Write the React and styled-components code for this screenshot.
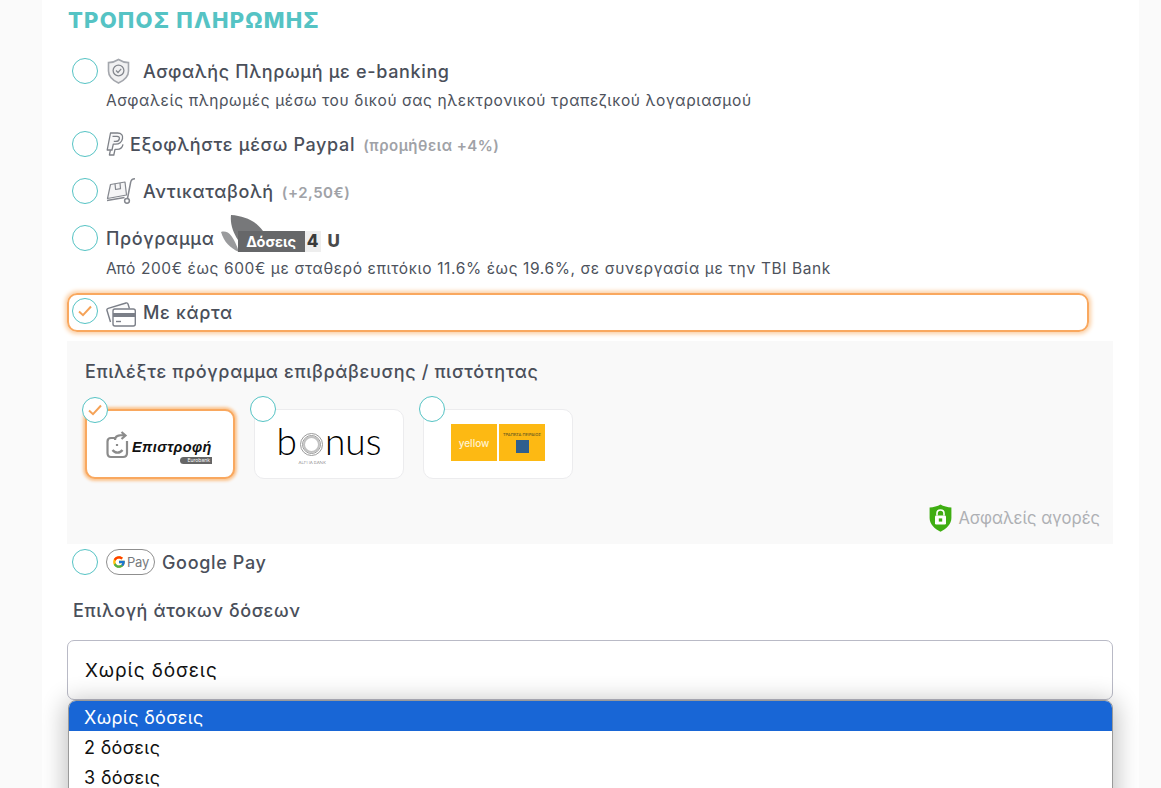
import React from "react";
import styled, { createGlobalStyle } from "styled-components";
import { FcGoogle } from "react-icons/fc";

const GlobalStyle = createGlobalStyle`
	html, body {
		margin: 0;
		height: 788px;
		overflow: hidden;
		background: #fafafa;
		font-family: "Inter", "Noto Sans", sans-serif;
	}
	* {
		box-sizing: border-box;
	}
`;

function ShieldIcon() {
	return (
		<svg width="25" height="26" viewBox="0 0 25 26" fill="none">
			<path d="M12.5 1.5 C9.5 3.5 6 4.5 2.5 4.6 V13 C2.5 18.5 7 22.5 12.5 25 C18 22.5 22.5 18.5 22.5 13 V4.6 C19 4.5 15.5 3.5 12.5 1.5Z" fill="#f1f1f2" stroke="#a4a7ad" strokeWidth="1.6" />
			<circle cx="12.5" cy="12.5" r="5.4" stroke="#85888f" strokeWidth="1.3" />
			<path d="M10 12.5 L12 14.5 L15.2 10.8" stroke="#85888f" strokeWidth="1.2" />
		</svg>
	);
}

function PaypalIcon() {
	return (
		<svg width="18" height="24" viewBox="0 0 18 24" fill="none" stroke="#7d8087" strokeWidth="1.3" strokeLinejoin="round">
			<path d="M4.5 1 H11.5 C15.5 1 17.2 3.4 16.5 6.6 C15.7 10.4 13 12.2 9.5 12.2 H7.3 L6 18 H1.2 Z" fill="#f7f7f8" />
			<path d="M6.5 4.4 H11 C13 4.4 13.7 5.4 13.3 7 C12.9 8.8 11.6 9.4 9.8 9.4 H7.8" />
			<path d="M4.4 18.2 L3.4 23 H7.8 L9 17.4 H11 C14.2 17.4 16.4 15.4 17 12.4" />
		</svg>
	);
}

function TrolleyIcon() {
	return (
		<svg width="30" height="26" viewBox="0 0 30 26" fill="none" stroke="#85888f" strokeWidth="1.2" strokeLinejoin="round">
			<path d="M4.5 6.5 L19 4 L20.5 17 L1.5 20.5 Z" fill="#f5f5f6" />
			<path d="M9 5.8 L9.6 11.5 L14.5 10.7 L14 5" />
			<path d="M29 0.8 C26 0.8 25 2 24.6 4.5 L21.5 20.5" strokeWidth="1.5" />
			<path d="M1 22.5 L18.5 19.5" strokeWidth="1.5" />
			<circle cx="21" cy="22.8" r="2.4" fill="#fff" strokeWidth="1.5" />
		</svg>
	);
}

function CardsIcon() {
	return (
		<svg width="30" height="25" viewBox="0 0 30 25" fill="none" stroke="#7b7f88" strokeWidth="1.4" strokeLinejoin="round">
			<path d="M4.5 20 L1 8.5 C0.7 7.5 1.2 6.7 2.2 6.4 L20 1 C21 0.7 21.8 1.2 22.1 2.2 L23.4 6.5" fill="#fbfbfb" />
			<rect x="7" y="7" width="22.3" height="17" rx="2" fill="#fff" />
			<rect x="7" y="11" width="22.3" height="4" fill="#7b7f88" stroke="none" />
			<path d="M10 19.5 H15" />
		</svg>
	);
}

function LockShield() {
	return (
		<svg width="23" height="28" viewBox="0 0 23 28">
			<path d="M11.5 0.5 C8.5 2.5 4.5 3.2 0.6 3.4 V14 C0.6 20 5.5 25 11.5 27.7 C17.5 25 22.4 20 22.4 14 V3.4 C18.5 3.2 14.5 2.5 11.5 0.5Z" fill="#3fae12" />
			<rect x="6" y="11.5" width="11" height="9" rx="1.2" fill="#fff" />
			<path d="M8 11.5 V9.3 C8 7.2 9.5 6 11.5 6 C13.5 6 15 7.2 15 9.3 V11.5" fill="none" stroke="#fff" strokeWidth="1.6" />
			<rect x="9.8" y="14.4" width="3.4" height="3.2" fill="#3fae12" />
		</svg>
	);
}

function Leaves() {
	return (
		<svg width="48" height="37" viewBox="0 0 48 37">
			<path d="M0 17 C7 15 12 20 18 37 C9 33 3 27 0 17Z" fill="#9a9b9d" />
			<path d="M10 0 C24 1 35 6 42 16 L18 16 L17 25 C12 17 9 9 10 0Z" fill="#77787a" />
		</svg>
	);
}

function ReturnIcon() {
	return (
		<svg width="24" height="28" viewBox="0 0 24 28" fill="none" stroke="#8b8b8b" strokeWidth="2.2">
			<path d="M9 7 H5 C3 7 1.5 8.5 1.5 10.5 V22 C1.5 24.5 3 26 5 26 H17 C19.5 26 21 24.5 21 22 V10" />
			<path d="M9 9 C9 5 12 4 19 4 M15.5 1 L19.5 4.5 L15.5 8" />
			<path d="M6.5 19 C9 22.5 14 22.5 16.5 19" />
			<path d="M11 13 V15" />
		</svg>
	);
}

function Radio({ checked, className }) {
	return (
		<RadioCircle className={className}>
			{checked && (
				<svg width="14" height="12" viewBox="0 0 14 12" fill="none">
					<path d="M1 6.5 L5 10.2 L13 1.5" stroke="#f5a257" strokeWidth="2" />
				</svg>
			)}
		</RadioCircle>
	);
}

function App() {
	return (
		<>
			<GlobalStyle />
			<Panel>
				<Title>ΤΡΟΠΟΣ ΠΛΗΡΩΜΗΣ</Title>

				<Option>
					<Radio />
					<IconSlot $width={37}>
						<ShieldIcon />
					</IconSlot>
					<OptionName>Ασφαλής Πληρωμή με e-banking</OptionName>
				</Option>
				<Description>Ασφαλείς πληρωμές μέσω του δικού σας ηλεκτρονικού τραπεζικού λογαριασμού</Description>

				<Option>
					<Radio />
					<IconSlot $width={24}>
						<PaypalIcon />
					</IconSlot>
					<OptionName>Εξοφλήστε μέσω Paypal</OptionName>
					<Note>(προμήθεια +4%)</Note>
				</Option>

				<Option>
					<Radio />
					<IconSlot $width={37}>
						<TrolleyIcon />
					</IconSlot>
					<OptionName>Αντικαταβολή</OptionName>
					<Note>(+2,50€)</Note>
				</Option>

				<Option>
					<Radio />
					<OptionName>Πρόγραμμα</OptionName>
					<DosisLogo>
						<Leaves />
						<DosisLabel>Δόσεις</DosisLabel>
						<DosisFour>4</DosisFour>
						<DosisU>U</DosisU>
					</DosisLogo>
				</Option>
				<Description $low>Από 200€ έως 600€ με σταθερό επιτόκιο 11.6% έως 19.6%, σε συνεργασία με την TBI Bank</Description>

				<CardOption>
					<Radio checked />
					<IconSlot $width={37}>
						<CardsIcon />
					</IconSlot>
					<OptionName>Με κάρτα</OptionName>
				</CardOption>

				<LoyaltyBox>
					<LoyaltyTitle>Επιλέξτε πρόγραμμα επιβράβευσης / πιστότητας</LoyaltyTitle>
					<LoyaltyRow>
						<LoyaltyCard $active>
							<CardRadio checked />
							<EpistrofiLogo>
								<ReturnIcon />
								<EpistrofiText>Επιστροφή</EpistrofiText>
								<EurobankTag>Eurobank</EurobankTag>
							</EpistrofiLogo>
						</LoyaltyCard>
						<LoyaltyCard>
							<CardRadio />
							<BonusLogo>
								b<BonusRing />nus
								<AlphaText>ALPHA BANK</AlphaText>
							</BonusLogo>
						</LoyaltyCard>
						<LoyaltyCard>
							<CardRadio />
							<YellowLogo>
								<YellowTile>yellow</YellowTile>
								<YellowTile $stacked>
									<PiraeusText>ΤΡΑΠΕΖΑ ΠΕΙΡΑΙΩΣ</PiraeusText>
									<PiraeusMark />
								</YellowTile>
							</YellowLogo>
						</LoyaltyCard>
					</LoyaltyRow>
					<SecureLine>
						<LockShield />
						<span>Ασφαλείς αγορές</span>
					</SecureLine>
				</LoyaltyBox>

				<GoogleOption>
					<Radio />
					<GPayBadge>
						<FcGoogle size={14} />
						<span>Pay</span>
					</GPayBadge>
					<OptionName>Google Pay</OptionName>
				</GoogleOption>

				<SelectLabel>Επιλογή άτοκων δόσεων</SelectLabel>
				<SelectWrap>
					<SelectBox>Χωρίς δόσεις</SelectBox>
					<Dropdown>
						<DropdownItem $selected>Χωρίς δόσεις</DropdownItem>
						<DropdownItem>2 δόσεις</DropdownItem>
						<DropdownItem>3 δόσεις</DropdownItem>
					</Dropdown>
				</SelectWrap>
			</Panel>
		</>
	);
}

export default App;

const Panel = styled.div`
	width: 1097px;
	height: 788px;
	margin-left: 42px;
	padding: 9px 26px 0 25px;
	background: #fff;
	overflow: hidden;
`;

const Title = styled.h2`
	margin: 0 0 27px 1px;
	height: 22px;
	font-size: 22px;
	line-height: 22px;
	font-weight: 800;
	letter-spacing: 1.2px;
	color: #55c3c4;
`;

const RadioCircle = styled.span`
	flex: none;
	display: flex;
	align-items: center;
	justify-content: center;
	width: 26px;
	height: 26px;
	margin-right: 8px;
	border: 1.3px solid #55c3c4;
	border-radius: 50%;
	background: #fff;
`;

const Option = styled.div`
	display: flex;
	align-items: center;
	height: 26px;
	margin-bottom: 21px;
	padding-left: 5px;
`;

const IconSlot = styled.span`
	flex: none;
	display: flex;
	align-items: center;
	width: ${(p) => p.$width}px;
`;

const OptionName = styled.span`
	font-size: 18px;
	font-weight: 500;
	letter-spacing: 0.65px;
	color: #4a4f5a;
	white-space: nowrap;
`;

const Note = styled.span`
	margin-left: 8px;
	padding-top: 2px;
	font-size: 15px;
	font-weight: 600;
	letter-spacing: 0.5px;
	color: #a0a2a7;
	white-space: nowrap;
`;

const Description = styled.div`
	height: 18px;
	margin: ${(p) => (p.$low ? "-12px 0 20px 39px" : "-13px 0 21px 39px")};
	font-size: 15.5px;
	line-height: 18px;
	letter-spacing: 0.6px;
	color: #4d525c;
	white-space: nowrap;
`;

const DosisLogo = styled.span`
	position: relative;
	display: flex;
	align-items: flex-end;
	width: 120px;
	height: 37px;
	margin: -9px 0 0 6px;
`;

const DosisLabel = styled.span`
	position: absolute;
	left: 17px;
	bottom: 0;
	width: 67px;
	height: 21px;
	background: #666769;
	color: #fff;
	font-size: 14.5px;
	font-weight: 700;
	line-height: 21px;
	text-align: center;
`;

const DosisFour = styled.span`
	position: absolute;
	left: 84px;
	bottom: 0;
	width: 16px;
	height: 21px;
	background: #eeeeee;
	color: #3a3a3a;
	font-size: 17px;
	font-weight: 800;
	line-height: 21px;
	text-align: center;
`;

const DosisU = styled.span`
	position: absolute;
	left: 107px;
	bottom: 0;
	color: #4a4a4a;
	font-size: 17px;
	font-weight: 800;
	line-height: 21px;
`;

const CardOption = styled(Option)`
	width: 1022px;
	height: 39px;
	margin: -5px 0 9px 0;
	padding: 0 0 0 3px;
	border: 2px solid #f9a85f;
	border-radius: 10px;
	box-shadow: 0 0 4px 2px #fbcfa4;

	${RadioCircle} {
		margin-top: -3px;
	}
	${IconSlot} {
		padding-top: 4px;
	}
`;

const LoyaltyBox = styled.div`
	display: flex;
	flex-direction: column;
	height: 203px;
	padding: 20px 13px 0 18px;
	background: #f9f9f9;
`;

const LoyaltyTitle = styled.div`
	height: 22px;
	font-size: 18px;
	font-weight: 500;
	line-height: 22px;
	letter-spacing: 0.65px;
	color: #4a4f5a;
`;

const LoyaltyRow = styled.div`
	display: flex;
	gap: 19px;
	margin-top: 26px;
`;

const LoyaltyCard = styled.div`
	position: relative;
	display: flex;
	align-items: center;
	justify-content: center;
	width: 150px;
	height: 70px;
	background: #fff;
	border: ${(p) => (p.$active ? "2px solid #f9a85f" : "1px solid #ececee")};
	border-radius: 10px;
	box-shadow: ${(p) => (p.$active ? "0 0 3px 2px #fbc48f" : "none")};
`;

const CardRadio = styled(Radio)`
	position: absolute;
	top: -14px;
	left: -5px;
	margin: 0;
`;

const EpistrofiLogo = styled.div`
	position: relative;
	display: flex;
	align-items: center;
	gap: 2px;
	width: 106px;
	height: 38px;
	margin: 1px 0 0 -2px;
`;

const EpistrofiText = styled.span`
	margin-top: 4px;
	font-family: "Liberation Sans", sans-serif;
	font-size: 14.5px;
	font-style: italic;
	font-weight: 700;
	color: #111;
	letter-spacing: 0.4px;
`;

const EurobankTag = styled.span`
	position: absolute;
	right: 0;
	bottom: 0;
	padding: 0 2px 0 8px;
	border-radius: 4px 0 0 4px;
	background: #666;
	color: #fff;
	font-size: 5px;
	line-height: 7px;
`;

const BonusLogo = styled.div`
	position: relative;
	display: flex;
	align-items: baseline;
	height: 46px;
	margin: -5px 0 0 0;
	font-family: "Lato", sans-serif;
	font-size: 37px;
	font-weight: 300;
	line-height: 44px;
	color: #000;
`;

const BonusRing = styled.span`
	display: inline-block;
	width: 23px;
	height: 23px;
	margin: 0 2px 0 3px;
	transform: translateY(1px);
	border: 3px double #9a9a9a;
	outline: 2px solid #c2c2c2;
	outline-offset: -5px;
	border-radius: 50%;
`;

const AlphaText = styled.span`
	position: absolute;
	left: 22px;
	bottom: -1px;
	font-size: 4.5px;
	line-height: 6px;
	color: #555;
`;

const YellowLogo = styled.div`
	display: flex;
	gap: 2px;
	height: 37px;
	margin-top: -3px;
`;

const YellowTile = styled.div`
	display: flex;
	flex-direction: ${(p) => (p.$stacked ? "column" : "row")};
	align-items: center;
	justify-content: center;
	gap: 3px;
	width: 46px;
	height: 37px;
	background: #fdb913;
	color: #fff3d0;
	font-size: 10px;
	font-weight: 500;
`;

const PiraeusText = styled.span`
	color: #6a5a20;
	font-size: 4px;
	font-weight: 500;
	white-space: nowrap;
`;

const PiraeusMark = styled.span`
	width: 13px;
	height: 13px;
	background: #2f5f8e;
`;

const SecureLine = styled.div`
	display: flex;
	align-items: center;
	justify-content: flex-end;
	gap: 6px;
	margin-top: 25px;
	font-size: 16.6px;
	color: #aeb0b4;
`;

const GoogleOption = styled(Option)`
	margin: 5px 0 27px;
`;

const GPayBadge = styled.span`
	display: flex;
	align-items: center;
	justify-content: center;
	gap: 1px;
	width: 49px;
	height: 26px;
	margin-right: 7px;
	border: 1.5px solid #8f8f8f;
	border-radius: 13px;
	font-size: 13px;
	letter-spacing: -0.3px;
	color: #77797d;
`;

const SelectLabel = styled.div`
	height: 18px;
	margin: 0 0 20px 6px;
	font-size: 18px;
	font-weight: 500;
	line-height: 18px;
	letter-spacing: 0.6px;
	color: #4a4f5a;
`;

const SelectWrap = styled.div`
	position: relative;
`;

const SelectBox = styled.div`
	display: flex;
	align-items: center;
	height: 60px;
	padding-left: 17px;
	background: #fff;
	border: 1px solid #b9bac6;
	border-radius: 7px;
	font-size: 19px;
	letter-spacing: 0.9px;
	color: #111;
`;

const Dropdown = styled.div`
	position: absolute;
	top: 60px;
	left: 1px;
	width: 1045px;
	height: 120px;
	overflow: hidden;
	background: #fff;
	border: 1px solid #9a9a9a;
	border-radius: 8px;
	box-shadow: 0 4px 24px 4px rgba(0, 0, 0, 0.24);
`;

const DropdownItem = styled.div`
	height: 30px;
	padding-left: 15px;
	background: ${(p) => (p.$selected ? "#1866d6" : "#fff")};
	color: ${(p) => (p.$selected ? "#fff" : "#111")};
	font-size: 18px;
	letter-spacing: 0.35px;
	line-height: 34px;
`;
